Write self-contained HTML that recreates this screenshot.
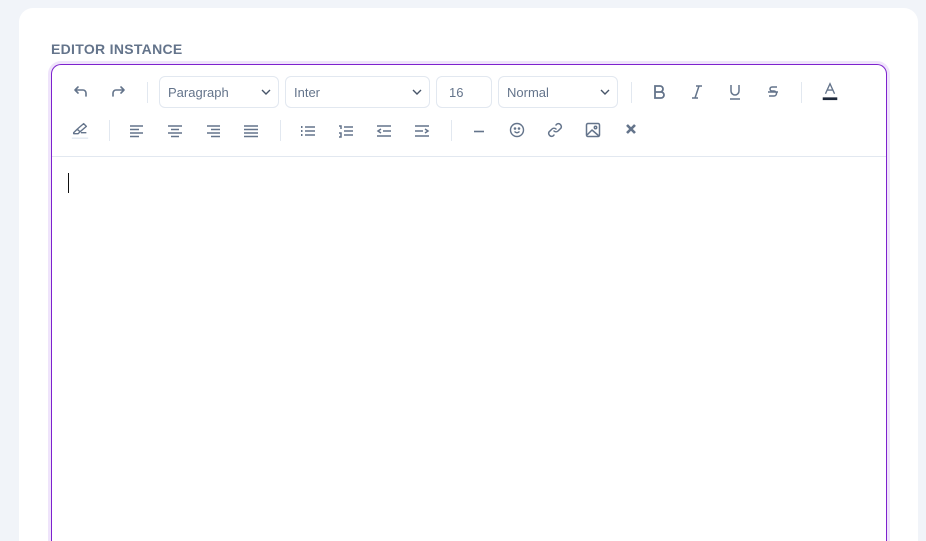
<!DOCTYPE html>
<html style="width:926px;height:541px;overflow:hidden"><head><style>
*{box-sizing:border-box;margin:0;padding:0}
body{width:926px;height:541px;background:#f1f4f9;font-family:"Liberation Sans",sans-serif;overflow:hidden;position:relative}
.card{position:absolute;left:19px;top:8px;width:899px;height:533px;background:#fff;border-radius:14px 14px 0 0}
.lbl{position:absolute;left:51px;top:41px;font-size:14px;font-weight:bold;color:#64748b;letter-spacing:.3px}
.ed{position:absolute;left:51px;top:64px;width:836px;height:477px;border:1px solid #7e22ce;border-bottom:none;border-radius:10px 10px 0 0;box-shadow:0 0 0 3px #efe4fb;background:#fff}
.sep{position:absolute;left:0;right:0;top:91px;border-top:1px solid #e2e8f0}
.sel{position:absolute;top:11px;height:32px;border:1px solid #e2e8f0;border-radius:6px;font-size:13px;color:#64748b;padding:8px 8px}
.sel svg{position:absolute;right:7px;top:11px}
.ic{position:absolute;width:20px;height:20px}
.vl{position:absolute;width:1px;height:21px;background:#e2e8f0}
.caret{position:absolute;left:16px;top:108px;width:1px;height:20px;background:#111}
</style></head><body>
<div class="card"></div>
<div class="lbl">EDITOR INSTANCE</div>
<div class="ed">
<svg class="ic" style="left:19px;top:17px" viewBox="0 0 20 20" fill="none" stroke="#64748b" stroke-width="1.6" stroke-linecap="round" stroke-linejoin="round"><path d="M7 5L4 8l3 3M4 8h8a3 3 0 013 3v3"/></svg>
<svg class="ic" style="left:56px;top:17px" viewBox="0 0 20 20" fill="none" stroke="#64748b" stroke-width="1.6" stroke-linecap="round" stroke-linejoin="round"><path d="M13 5l3 3-3 3M16 8H8a3 3 0 00-3 3v3"/></svg>
<div class="vl" style="left:95px;top:17px"></div>
<div class="sel" style="left:107px;width:120px">Paragraph<svg width="10" height="8" viewBox="0 0 10 8"><path d="M1 2l4 4 4-4" stroke="#475569" stroke-width="1.4" fill="none"/></svg></div>
<div class="sel" style="left:233px;width:145px">Inter<svg width="10" height="8" viewBox="0 0 10 8"><path d="M1 2l4 4 4-4" stroke="#475569" stroke-width="1.4" fill="none"/></svg></div>
<div class="sel" style="left:384px;width:56px;padding-left:12px">16</div>
<div class="sel" style="left:446px;width:120px">Normal<svg width="10" height="8" viewBox="0 0 10 8"><path d="M1 2l4 4 4-4" stroke="#475569" stroke-width="1.4" fill="none"/></svg></div>
<div class="vl" style="left:579px;top:17px"></div>
<svg class="ic" style="left:597px;top:17px" viewBox="0 0 20 20" fill="none" stroke="#64748b" stroke-width="1.8"><path d="M6 4h5a3 3 0 010 6H6zM6 10h6a3 3 0 010 6H6zM6 4v12"/></svg>
<svg class="ic" style="left:635px;top:17px" viewBox="0 0 20 20" fill="none" stroke="#64748b" stroke-width="1.5"><path d="M9 4h6M5 16h6M12 4l-4 12"/></svg>
<svg class="ic" style="left:673px;top:17px" viewBox="0 0 20 20" fill="none" stroke="#64748b" stroke-width="1.5"><path d="M6 3v6a4 4 0 008 0V3M5 17h10"/></svg>
<svg class="ic" style="left:711px;top:17px" viewBox="0 0 20 20" fill="none" stroke="#64748b" stroke-width="1.5"><path d="M14 5H9a2 2 0 000 4h2a2.5 2.5 0 010 5H6M5 10h10"/></svg>
<div class="vl" style="left:749px;top:17px"></div>
<svg class="ic" style="left:768px;top:16px" viewBox="0 0 20 22" fill="none" stroke="#64748b" stroke-width="1.5"><path d="M5 14l5-11 5 11M7 10h6"/><rect x="2" y="18" width="16" height="3" fill="#1e293b" stroke="none"/></svg>
<svg class="ic" style="left:18px;top:55px" viewBox="0 0 20 22" fill="none" stroke="#64748b" stroke-width="1.5" stroke-linejoin="round"><path d="M3 14l4-4 3 3-2 2H3zM7 10l7-6 3 3-7 6M11 14h6"/><path d="M1 20h18" stroke="#e2e8f0"/></svg>
<div class="vl" style="left:57px;top:55px"></div>
<svg class="ic" style="left:75px;top:56px" viewBox="0 0 20 20" stroke="#64748b" stroke-width="1.5"><path d="M3 5h13M3 8.5h9M3 12h13M3 15.5h9"/></svg>
<svg class="ic" style="left:113px;top:56px" viewBox="0 0 20 20" stroke="#64748b" stroke-width="1.5"><path d="M3 5h14M6 8.5h8M3 12h14M6 15.5h8"/></svg>
<svg class="ic" style="left:151px;top:56px" viewBox="0 0 20 20" stroke="#64748b" stroke-width="1.5"><path d="M4 5h13M8 8.5h9M4 12h13M8 15.5h9"/></svg>
<svg class="ic" style="left:189px;top:56px" viewBox="0 0 20 20" stroke="#64748b" stroke-width="1.5"><path d="M3 5h14M3 8.5h14M3 12h14M3 15.5h14"/></svg>
<div class="vl" style="left:228px;top:55px"></div>
<svg class="ic" style="left:246px;top:56px" viewBox="0 0 20 20" stroke="#64748b" stroke-width="1.5"><path d="M7 6h10M7 10h10M7 14h10"/><path d="M3 6h1.5M3 10h1.5M3 14h1.5" stroke-width="2"/></svg>
<svg class="ic" style="left:284px;top:56px" viewBox="0 0 20 20" stroke="#64748b" stroke-width="1.5" fill="none"><path d="M8 6h9M8 10h9M8 14h9M3 5h2v3M3 12h2v4H3"/></svg>
<svg class="ic" style="left:322px;top:56px" viewBox="0 0 20 20" stroke="#64748b" stroke-width="1.5" fill="none"><path d="M3 5h14M9 10h8M3 15h14M7 8l-3 2 3 2"/></svg>
<svg class="ic" style="left:360px;top:56px" viewBox="0 0 20 20" stroke="#64748b" stroke-width="1.5" fill="none"><path d="M3 5h14M3 10h8M3 15h14M13 8l3 2-3 2"/></svg>
<div class="vl" style="left:399px;top:55px"></div>
<svg class="ic" style="left:417px;top:56px" viewBox="0 0 20 20" stroke="#64748b" stroke-width="1.6"><path d="M5 10.5h10"/></svg>
<svg class="ic" style="left:455px;top:55px" viewBox="0 0 20 20" stroke="#64748b" stroke-width="1.4" fill="none"><circle cx="10" cy="10" r="6.5"/><path d="M7.5 11.5q2.5 2.5 5 0"/><circle cx="8" cy="8.5" r=".6" fill="#64748b"/><circle cx="12" cy="8.5" r=".6" fill="#64748b"/></svg>
<svg class="ic" style="left:493px;top:55px" viewBox="0 0 20 20" stroke="#64748b" stroke-width="1.5" fill="none" stroke-linecap="round"><path d="M9 11a3 3 0 004 0l3-3a3 3 0 00-4-4l-1 1M11 9a3 3 0 00-4 0l-3 3a3 3 0 004 4l1-1"/></svg>
<svg class="ic" style="left:531px;top:55px" viewBox="0 0 20 20" stroke="#64748b" stroke-width="1.5" fill="none" stroke-linejoin="round"><rect x="3.5" y="3.5" width="13" height="13" rx="1.5"/><path d="M4 15l5-5 7 6"/><circle cx="12.5" cy="7.5" r="1.2"/></svg>
<svg class="ic" style="left:569px;top:54px" viewBox="0 0 20 20" stroke="#64748b" stroke-width="2.6"><path d="M6 6l8 8M14 6l-8 8"/></svg>
<div class="sep"></div>
<div class="caret"></div>
</div>
</body></html>
